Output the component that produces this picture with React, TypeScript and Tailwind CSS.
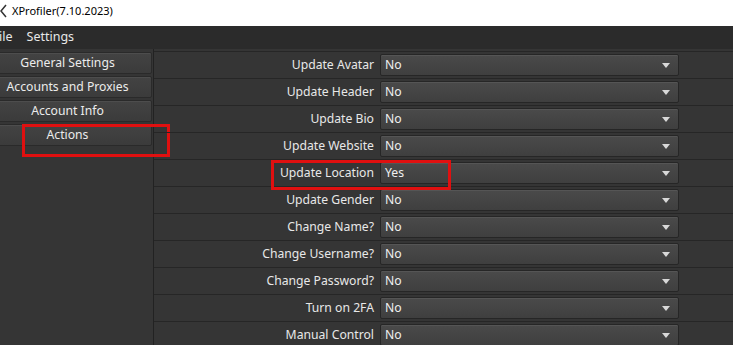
import React from "react";

const rows: { label: string; value: string }[] = [
  { label: "Update Avatar", value: "No" },
  { label: "Update Header", value: "No" },
  { label: "Update Bio", value: "No" },
  { label: "Update Website", value: "No" },
  { label: "Update Location", value: "Yes" },
  { label: "Update Gender", value: "No" },
  { label: "Change Name?", value: "No" },
  { label: "Change Username?", value: "No" },
  { label: "Change Password?", value: "No" },
  { label: "Turn on 2FA", value: "No" },
  { label: "Manual Control", value: "No" },
];

const navs = ["General Settings", "Accounts and Proxies", "Account Info", "Actions"];

function Combo({ value }: { value: string }) {
  return (
    <div className="relative flex h-[22px] w-[299px] items-center rounded-[2px] border border-[#262626] bg-gradient-to-b from-[#4a4a4a] to-[#3f3f3f] pl-[4px] text-[#f0f0f0] shadow-[inset_0_1px_0_#555]">
      <span>{value}</span>
      <svg
        className="absolute right-[8px] top-[8px]"
        width="8"
        height="5"
        viewBox="0 0 8 5"
      >
        <path d="M0 0 H8 L4 5 Z" fill="#d8d8d8" />
      </svg>
    </div>
  );
}

export default function App() {
  return (
    <div
      className="flex h-[345px] w-[733px] flex-col overflow-hidden bg-[#353535] text-[12.2px]"
      style={{ fontFamily: '"Noto Sans", "Open Sans", sans-serif' }}
    >
      {/* Title bar */}
      <div className="flex h-[26px] shrink-0 items-center bg-white text-[11px] text-black">
        <svg width="8" height="16" viewBox="0 0 8 16" className="mb-[4px]">
          <path d="M6 2 L1 8 L6 14" stroke="#333" strokeWidth="1.5" fill="none" />
        </svg>
        <span className="ml-[4px] pb-[4px]">XProfiler(7.10.2023)</span>
      </div>
      {/* Menu bar */}
      <div className="flex h-[23px] shrink-0 items-center gap-[14px] bg-[#2b2b2b] text-[12.5px] text-[#e8e8e8]">
        <span className="-ml-[1px]">ile</span>
        <span>Settings</span>
      </div>
      {/* Body */}
      <div className="flex min-h-0 flex-1">
        <div className="relative flex w-[153px] flex-col gap-[2px] pt-[3px]">
          {navs.map((n) => (
            <div
              key={n}
              className="-ml-[17px] flex h-[22px] w-[169px] shrink-0 items-center justify-center rounded-[2px] border border-[#2a2a2a] bg-gradient-to-b from-[#434343] to-[#3b3b3b] text-[#ececec] shadow-[inset_0_1px_0_#4d4d4d]"
            >
              {n}
            </div>
          ))}
          <div className="pointer-events-none absolute left-[22px] top-[75px] h-[33px] w-[148px] border-[3px] border-[#e01010]" />
        </div>
        <div className="w-[1px] bg-[#222]" />
        <div className="relative flex flex-1 flex-col pt-[2px]">
          {rows.map((r) => (
            <div key={r.label} className="flex h-[27px] shrink-0 items-center border-t border-[#262626]">
              <div className="w-[220px] text-right text-[#e8e8e8]">{r.label}</div>
              <div className="ml-[6px]">
                <Combo value={r.value} />
              </div>
            </div>
          ))}
          <div className="pointer-events-none absolute left-[117px] top-[111px] h-[30px] w-[180px] border-[3px] border-[#e01010]" />
        </div>
      </div>
    </div>
  );
}
